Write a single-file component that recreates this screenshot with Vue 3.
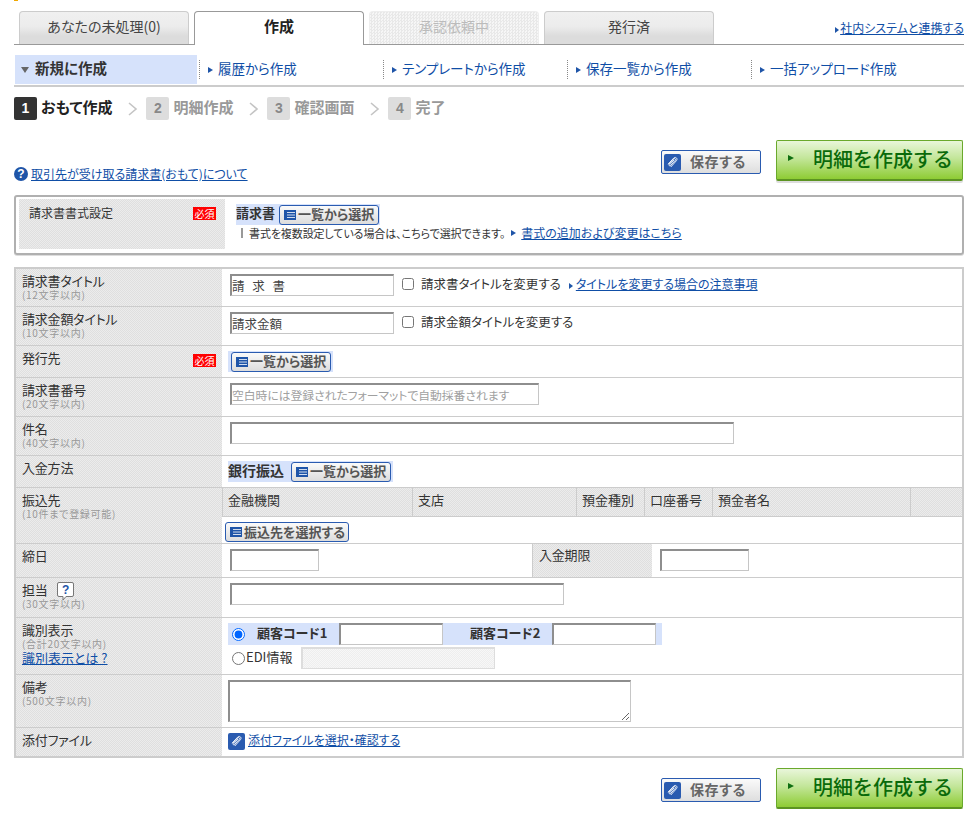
<script setup>
const navItems = ['履歴から作成', 'テンプレートから作成', '保存一覧から作成', '一括アップロード作成']
const steps = [
  { n: 1, label: 'おもて作成', on: true },
  { n: 2, label: '明細作成' },
  { n: 3, label: '確認画面' },
  { n: 4, label: '完了' }
]
const bankCols = [
  { t: '金融機関', c: 'c1' },
  { t: '支店', c: 'c2' },
  { t: '預金種別', c: 'c3' },
  { t: '口座番号', c: 'c4' },
  { t: '預金者名', c: 'c5' },
  { t: '', c: 'c6' }
]
</script>

<template>
  <div class="page">
    <div class="topmark"><span class="orange"></span></div>

    <div class="tabs">
      <div class="tab">あなたの未処理(0)</div>
      <div class="tab active">作成</div>
      <div class="tab disabled">承認依頼中</div>
      <div class="tab">発行済</div>
      <div class="tabfill"><a class="link small"><i class="arr"></i>社内システムと連携する</a></div>
    </div>

    <div class="subnav">
      <div class="subcur"><i class="arr down"></i>新規に作成</div>
      <div v-for="t in navItems" :key="t" class="subitem"><i class="arr"></i><span>{{ t }}</span></div>
    </div>

    <div class="steps">
      <template v-for="(s, i) in steps" :key="s.n">
        <span class="num" :class="{ on: s.on }">{{ s.n }}</span>
        <span class="steplabel" :class="{ on: s.on }">{{ s.label }}</span>
        <svg v-if="i < 3" class="chev" width="10" height="14" viewBox="0 0 10 14"><path d="M1 1l7 6-7 6" fill="none" stroke="#c4c4c4" stroke-width="1.6"/></svg>
      </template>
    </div>

    <div class="actions">
      <a class="helplink"><span class="qmark">?</span><span class="link">取引先が受け取る請求書(おもて)について</span></a>
      <button class="save">
        <svg class="clip" width="17" height="17" viewBox="0 0 17 17"><rect width="17" height="17" rx="2" fill="#2a5bb0"/><path d="M4.500 10.500l5-5.500c1-1 2.600-.2 1.900 1.200l-5 5.600c-.6.700-1.500-.1-.9-.9l4.500-5M6.800 13l5.700-6.400c1.600-1.900-.9-4.300-2.700-2.600L4 10.200" fill="none" stroke="#fff" stroke-width=".9"/></svg>
        <span>保存する</span>
      </button>
      <button class="create"><i class="garr"></i><span>明細を作成する</span></button>
    </div>

    <div class="formatbox">
      <div class="fmtlabel"><span>請求書書式設定</span><b class="req">必須</b></div>
      <div class="fmtval">
        <div class="blue fmtblue">
          <b>請求書</b>
          <button class="pick">
            <svg class="lst" width="12" height="10" viewBox="0 0 12 10"><path d="M0 0h12v10H0z" fill="#1f55a8"/><path d="M3 2.500h8M3 5h8M3 7.500h8" stroke="#fff" stroke-width=".8"/></svg>一覧から選択
          </button>
        </div>
        <div class="fmtnote"><i class="bar"></i><span>書式を複数設定している場合は、こちらで選択できます。</span><i class="arr notearr"></i><a class="link notelink">書式の追加および変更はこちら</a></div>
      </div>
    </div>

    <div class="table">
      <div class="row r38">
        <div class="lab">請求書タイトル<small>(12文字以内)</small></div>
        <div class="val">
          <input class="in w164 spaced" value="請 求 書" />
          <label class="chk"><input type="checkbox" />請求書タイトルを変更する</label>
          <i class="arr titlearr"></i><a class="link">タイトルを変更する場合の注意事項</a>
        </div>
      </div>
      <div class="row r39">
        <div class="lab">請求金額タイトル<small>(10文字以内)</small></div>
        <div class="val">
          <input class="in w164" value="請求金額" />
          <label class="chk"><input type="checkbox" />請求金額タイトルを変更する</label>
        </div>
      </div>
      <div class="row r32">
        <div class="lab labflex"><span>発行先</span><b class="req">必須</b></div>
        <div class="val tight">
          <div class="blue pad3">
            <button class="pick">
              <svg class="lst" width="12" height="10" viewBox="0 0 12 10"><path d="M0 0h12v10H0z" fill="#1f55a8"/><path d="M3 2.500h8M3 5h8M3 7.500h8" stroke="#fff" stroke-width=".8"/></svg>一覧から選択
            </button>
          </div>
        </div>
      </div>
      <div class="row r39">
        <div class="lab">請求書番号<small>(20文字以内)</small></div>
        <div class="val"><input class="in w309" placeholder="空白時には登録されたフォーマットで自動採番されます" /></div>
      </div>
      <div class="row r39">
        <div class="lab">件名<small>(40文字以内)</small></div>
        <div class="val"><input class="in w504" /></div>
      </div>
      <div class="row r32">
        <div class="lab">入金方法</div>
        <div class="val tight">
          <div class="blue bankmethod">
            <b>銀行振込</b>
            <button class="pick">
              <svg class="lst" width="12" height="10" viewBox="0 0 12 10"><path d="M0 0h12v10H0z" fill="#1f55a8"/><path d="M3 2.500h8M3 5h8M3 7.500h8" stroke="#fff" stroke-width=".8"/></svg>一覧から選択
            </button>
          </div>
        </div>
      </div>
      <div class="row r56">
        <div class="lab">振込先<small>(10件まで登録可能)</small></div>
        <div class="val bank">
          <div class="bankhead">
            <div v-for="c in bankCols" :key="c.c" class="bankcell" :class="c.c">{{ c.t }}</div>
          </div>
          <button class="pick bankpick">
            <svg class="lst" width="12" height="10" viewBox="0 0 12 10"><path d="M0 0h12v10H0z" fill="#1f55a8"/><path d="M3 2.500h8M3 5h8M3 7.500h8" stroke="#fff" stroke-width=".8"/></svg>振込先を選択する
          </button>
        </div>
      </div>
      <div class="row r34">
        <div class="lab">締日</div>
        <div class="val shimebi"><input class="in w89" /></div>
        <div class="lab lab2">入金期限</div>
        <div class="val"><input class="in w89" /></div>
      </div>
      <div class="row r40">
        <div class="lab"><span class="tanto">担当<svg class="tip" width="17" height="19" viewBox="0 0 17 19"><path d="M2 .5h13a1.500 1.500 0 0 1 1.500 1.500v11a1.500 1.500 0 0 1-1.500 1.500H9l-3 3.500v-3.500H2A1.500 1.500 0 0 1 .5 13V2A1.500 1.500 0 0 1 2 .5z" fill="#fff" stroke="#777"/><text x="8.500" y="11.500" text-anchor="middle" font-size="12" font-weight="700" fill="#1f55a8" font-family="Liberation Sans, sans-serif">?</text></svg></span><small>(30文字以内)</small></div>
        <div class="val"><input class="in w334" /></div>
      </div>
      <div class="row r57">
        <div class="lab">識別表示<small>(合計20文字以内)</small><a class="link idlink">識別表示とは ?</a></div>
        <div class="val tight idval">
          <div class="blue idblue">
            <input type="radio" name="id" checked class="rad" />
            <b class="code1">顧客コード1</b>
            <input class="in w104" />
            <b class="code2">顧客コード2</b>
            <input class="in w104" />
          </div>
          <div class="edi">
            <input type="radio" name="id" class="rad" /><span class="editext">EDI情報</span>
            <input class="in ediin" disabled />
          </div>
        </div>
      </div>
      <div class="row r53">
        <div class="lab">備考<small>(500文字以内)</small></div>
        <div class="val tight"><textarea class="in memo"></textarea></div>
      </div>
      <div class="row r28 last">
        <div class="lab">添付ファイル</div>
        <div class="val tight attach">
          <svg width="17" height="17" viewBox="0 0 17 17"><rect width="17" height="17" rx="2" fill="#2a5bb0"/><path d="M4.500 10.500l5-5.500c1-1 2.600-.2 1.900 1.200l-5 5.600c-.6.700-1.500-.1-.9-.9l4.500-5M6.800 13l5.700-6.400c1.600-1.900-.9-4.300-2.700-2.600L4 10.200" fill="none" stroke="#fff" stroke-width=".9"/></svg>
          <a class="link">添付ファイルを選択・確認する</a>
        </div>
      </div>
    </div>

    <div class="actions bottom">
      <button class="save">
        <svg class="clip" width="17" height="17" viewBox="0 0 17 17"><rect width="17" height="17" rx="2" fill="#2a5bb0"/><path d="M4.500 10.500l5-5.500c1-1 2.600-.2 1.900 1.200l-5 5.600c-.6.700-1.500-.1-.9-.9l4.500-5M6.800 13l5.700-6.400c1.600-1.900-.9-4.300-2.700-2.600L4 10.200" fill="none" stroke="#fff" stroke-width=".9"/></svg>
        <span>保存する</span>
      </button>
      <button class="create"><i class="garr"></i><span>明細を作成する</span></button>
    </div>
  </div>
</template>

<style>
html, body { margin: 0; background: #fff; }
</style>

<style scoped>
.page {
  width: 950px;
  margin-left: 14px;
  font-family: "Noto Sans CJK JP", "Liberation Sans", sans-serif;
  font-size: 13px;
  color: #333;
  font-feature-settings: "palt";
  line-height: 16px;
}
button, input, textarea { font-family: inherit; font-feature-settings: inherit; margin: 0; }
.topmark { height: 11px; }
.orange { display: block; width: 4px; height: 1px; background: #f0a800; }
.link { color: #0f4ea6; text-decoration: underline; cursor: pointer; }
.arr { display: inline-block; width: 0; height: 0; border-left: 5px solid #1f55a8; border-top: 3px solid transparent; border-bottom: 3px solid transparent; }
.arr.down { border-left: 4px solid transparent; border-right: 4px solid transparent; border-top: 6px solid #666; border-bottom: 0; margin-right: 6px; vertical-align: 1px; }

/* tabs */
.tabs { display: flex; height: 34px; padding-left: 5px; gap: 5px; border-bottom: 1px solid #999; box-sizing: border-box; }
.tab {
  width: 170px; box-sizing: border-box; text-align: center; font-size: 14px; line-height: 28px;
  border: 1px solid #ccc; border-bottom: 0; border-radius: 4px 4px 0 0; color: #444;
  background: linear-gradient(#f0f0f0 0, #ececec 45%, #dcdcdc 75%, #dcdcdc 100%);
}
.tab.active { background: #fff; border: 1px solid #999; border-bottom: 0; height: 34px; font-weight: 700; font-size: 15px; color: #222; }
.tab.disabled { background: repeating-conic-gradient(#e8e8e8 0 25%, #f6f6f6 0 50%) 0 0 / 3px 3px; color: #bbb; border-color: #eee; }
.tabfill { flex: 1; text-align: right; }
.small { font-size: 12px; line-height: 33px; }
.tabfill .arr { margin-right: 1px; border-left-width: 4px; }

/* sub nav */
.subnav { display: flex; margin-top: 10px; height: 32px; border-bottom: 2px solid #ccc; box-sizing: border-box; padding-bottom: 1px; font-size: 13.5px; }
.subcur { width: 182px; margin-left: 1px; height: 29px; box-sizing: border-box; background: #d6e2fb; font-weight: 700; line-height: 26px; padding-left: 6px; font-size: 14.5px; color: #333; margin-right: 2px; }
.subitem { width: 184px; height: 19px; margin-top: 5px; box-sizing: border-box; border-left: 1px dotted #888; line-height: 17px; color: #0f4ea6; padding-left: 8px; }
.subitem:last-child { width: auto; flex: 1; }
.subitem .arr { margin-right: 5px; vertical-align: 1px; }

/* steps */
.steps { display: flex; align-items: center; margin-top: 10px; height: 23px; font-weight: 700; font-size: 15px; color: #999; }
.steplabel { margin-top: -3px; }
.num { width: 23px; height: 23px; line-height: 23px; text-align: center; background: #ddd; color: #888; border-radius: 2px; font: 700 14px/23px "Liberation Sans", sans-serif; margin-right: 4px; }
.num.on { background: #333; color: #fff; }
.steplabel.on { color: #222; }
.chev { margin: 0 8px 0 16px; }

/* actions */
.actions { display: flex; margin-top: 20px; align-items: flex-start; padding-right: 1px; }
.helplink { margin-right: auto; margin-top: 26px; margin-bottom: -1px; display: flex; align-items: center; font-size: 12px; line-height: 16px; }
.qmark { width: 14px; height: 14px; border-radius: 50%; background: #1f55a8; color: #fff; font: 700 12px/14px "Liberation Sans", sans-serif; text-align: center; margin-right: 3px; }
.save {
  width: 100px; height: 24px; margin-top: 10px; margin-right: 15px; padding: 0 0 0 2px; display: flex; align-items: center; gap: 9px;
  border: 1px solid #2a5bb0; border-radius: 2px; background: linear-gradient(#fafafa, #dedede); color: #666; font-weight: 700; font-size: 14px; letter-spacing: .6px; box-sizing: border-box;
}
.save span { margin-top: -3px; }
.clip { flex: none; }
.create {
  width: 187px; height: 41px; padding: 0 0 4px 11px; display: flex; align-items: center; gap: 19px; box-sizing: border-box;
  border: 1px solid #6aa92c; border-bottom: 2px solid #5c9422; border-radius: 2px;
  background: linear-gradient(#e9f6da 0, #c3e69a 45%, #8ecc34 100%); color: #0a6a0a; font-size: 20px; font-weight: 500;
  font-feature-settings: normal; box-shadow: 0 2px 0 #ddd;
}
.garr { width: 0; height: 0; border-left: 6px solid #0f6e12; border-top: 3.5px solid transparent; border-bottom: 3.5px solid transparent; }
.bottom { margin-top: 10px; justify-content: flex-end; }

/* format box */
.formatbox { margin-top: 14px; height: 60px; box-sizing: border-box; border: 2px solid #b0b0b0; border-radius: 3px; padding: 2px 3px; display: flex; box-shadow: 0 1px 0 #ddd; }
.fmtlabel { width: 206px; height: 50px; box-sizing: border-box; padding: 6px 5px 0 10px; font-size: 12px; display: flex; justify-content: space-between; align-items: flex-start; background: repeating-conic-gradient(#dfdfdf 0 25%, #ececec 0 50%) 0 0 / 2px 2px; }
.fmtlabel .req { margin: 2px 4px 0 0; }
.req { width: 23px; height: 13px; background: #f00; color: #fff; font-size: 10px; line-height: 13px; font-weight: 400; text-align: center; letter-spacing: 0; }
.fmtval { padding: 5px 0 0 11px; }
.fmtblue { width: 144px; height: 21px; }
.fmtblue b { margin-right: 4px; margin-top: -3px; }
.fmtnote { display: flex; align-items: center; margin-top: 0; margin-left: 5px; font-size: 11px; color: #333; height: 16px; letter-spacing: -.1px; }
.fmtnote .bar { width: 2px; height: 10px; background: #999; margin-right: 6px; }
.notearr { margin: 0 5px 0 6px; }
.notelink { font-size: 12px; letter-spacing: 0; }

/* blue + pick */
.blue { background: #d6e2fb; display: flex; align-items: center; box-sizing: border-box; font-size: 13px; color: #333; }
.blue b { color: #333; }
.pick {
  display: inline-flex; align-items: center; height: 20px; width: 100px; padding: 0 0 2px 4px; box-sizing: border-box; white-space: nowrap;
  border: 1px solid #2a5bb0; border-radius: 3px; background: linear-gradient(#fafafa, #dcdcdc); color: #555; font-size: 13px; font-weight: 700;
}
.lst { flex: none; margin: 2px 2px 0 0; }

/* table */
.table { margin-top: 12px; border: 2px solid #ccc; }
.row { display: flex; box-sizing: border-box; border-bottom: 1px solid #ccc; }
.row.last { border-bottom: 0; }
.r28 { height: 28px; } .r32 { height: 32px; } .r34 { height: 34px; } .r38 { height: 38px; } .r39 { height: 39px; }
.r40 { height: 40px; } .r53 { height: 53px; } .r56 { height: 56px; } .r57 { height: 57px; }
.lab { width: 206px; flex: none; box-sizing: border-box; padding: 4px 6px 0; background: repeating-conic-gradient(#dfdfdf 0 25%, #ececec 0 50%) 0 0 / 2px 2px; color: #333; letter-spacing: -.2px; }
.lab small { display: block; font-size: 10px; line-height: 11px; color: #999; letter-spacing: .7px; }
.labflex { display: flex; justify-content: space-between; align-items: flex-start; }
.labflex .req { margin-top: 4px; }
.val { flex: 1; box-sizing: border-box; padding: 5px 0 0 8px; display: flex; align-items: flex-start; }
.tight { padding-left: 6px; }
.in {
  box-sizing: border-box; height: 22px; padding: 0; background: #fff; outline: none; font-size: 12.5px; color: #444;
  border-style: solid; border-width: 2px 1px 1px 2px; border-color: #8e8e8e #c6c6c6 #c6c6c6 #8e8e8e; border-radius: 0;
}
.in::placeholder { color: #a0a0a0; font-size: 11.8px; }
.spaced { word-spacing: 5px; }
.w164 { width: 164px; } .w309 { width: 309px; } .w504 { width: 504px; } .w89 { width: 89px; } .w334 { width: 334px; } .w104 { width: 104px; }
.chk { display: flex; align-items: center; margin: 2px 0 0 8px; font-size: 12.5px; }
.chk input { width: 12px; height: 12px; margin: 0 7px 0 0; }
.titlearr { margin: 9px 3px 0 8px; border-left-width: 4px; }
.val .link { line-height: 20px; font-size: 12px; }
.pad3 { padding: 0 2px 0 3px; height: 21px; width: 105px; }
.bankmethod { height: 21px; width: 165px; font-size: 14px; }
.bankmethod b { margin: -3px 7px 0 0; }

/* bank */
.bank { display: block; padding: 0; }
.bankhead { display: flex; height: 29px; border-bottom: 1px solid #ccc; box-sizing: border-box; background: repeating-conic-gradient(#dfdfdf 0 25%, #ececec 0 50%) 0 0 / 2px 2px; }
.bankcell { box-sizing: border-box; border-left: 1px solid #ccc; padding: 4px 0 0 5px; }
.c1 { width: 190px; } .c2 { width: 164px; } .c3 { width: 68px; } .c4 { width: 68px; } .c5 { width: 198px; } .c6 { flex: 1; }
.bankpick { width: 124px; margin: 5px 0 0 3px; }

/* deadline */
.shimebi { flex: none; width: 310px; }
.lab2 { width: 120px; padding-top: 3px; border-left: 1px solid #ccc; }

/* tanto */
.tanto { display: flex; align-items: flex-start; }
.tip { margin: 0 0 0 9px; }
.r40 small { margin-top: -3px; }

/* id */
.idval { display: block; }
.idblue { height: 22px; width: 434px; padding-left: 4px; }
.rad { width: 13px; height: 13px; margin: 0; accent-color: #0066ff; flex: none; }
.code1, .code2 { white-space: nowrap; flex: none; margin-top: -2px; }
.code1 { margin-left: 12px; margin-right: 13px; width: 69px; }
.code2 { margin-left: 27px; margin-right: 12px; width: 70px; }
.edi { display: flex; align-items: center; margin: 2px 0 0 4px; }
.editext { margin: -2px 9px 0 1px; }
.ediin { width: 194px; border-color: #ddd; background: repeating-conic-gradient(#eeeeee 0 25%, #f7f7f7 0 50%) 0 0 / 2px 2px; }
.idlink { display: block; font-size: 13px; line-height: 15px; margin-top: 1px; letter-spacing: 0; }

/* memo */
.memo { width: 403px; height: 42px; display: block; resize: both; }
.attach .link { margin-left: 3px; line-height: 14px; }
</style>
